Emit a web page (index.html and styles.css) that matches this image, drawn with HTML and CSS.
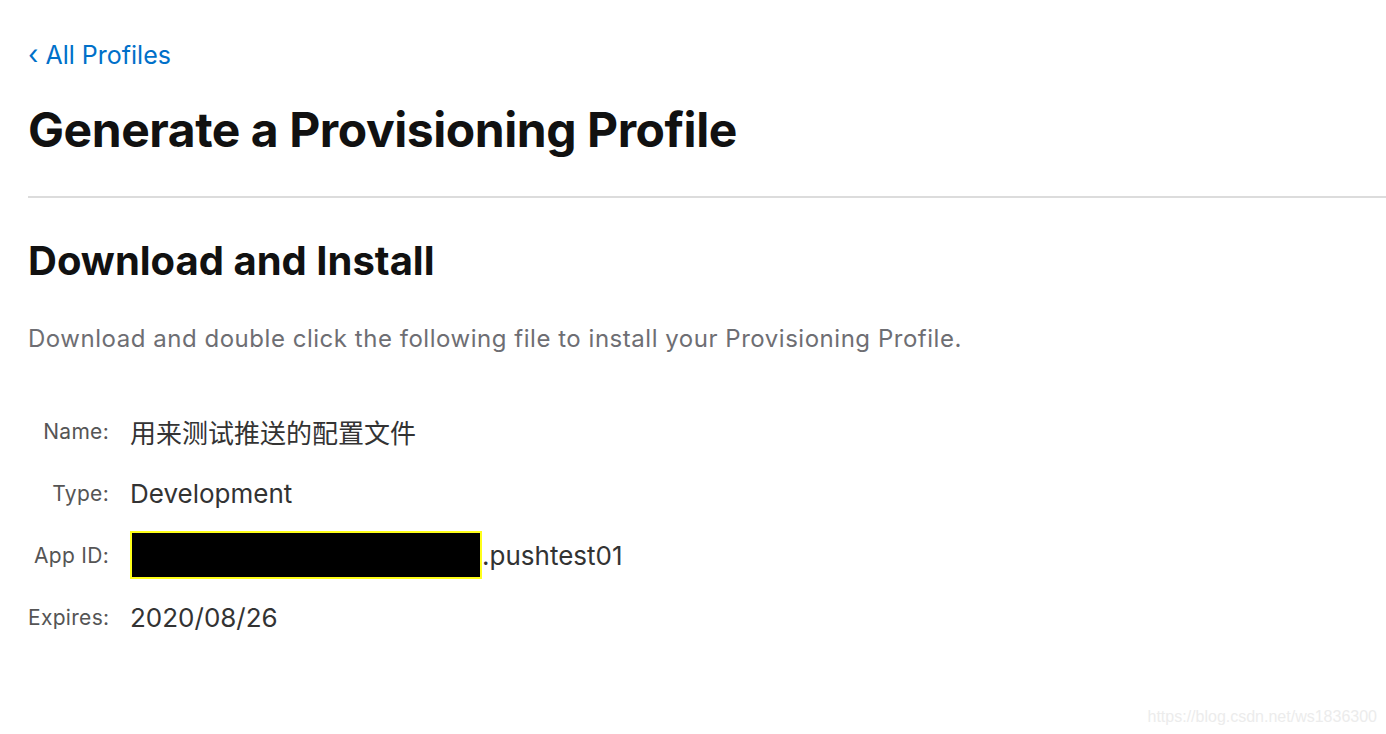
FILE: index.html
```html
<!DOCTYPE html>
<html lang="en">
<head>
<meta charset="utf-8">
<title>Generate a Provisioning Profile</title>
<link rel="stylesheet" href="styles.css">
</head>
<body>
<main class="page">
  <a class="back" href="#"><span class="chev">‹</span> All Profiles</a>
  <h1 class="title">Generate a Provisioning Profile</h1>
  <hr class="rule">
  <h2 class="subtitle">Download and Install</h2>
  <p class="intro">Download and double click the following file to install your Provisioning Profile.</p>
  <dl class="details">
    <div class="row"><dt>Name:</dt><dd>用来测试推送的配置文件</dd></div>
    <div class="row"><dt>Type:</dt><dd>Development</dd></div>
    <div class="row"><dt>App ID:</dt><dd><span class="redact"></span>.pushtest01</dd></div>
    <div class="row"><dt>Expires:</dt><dd>2020/08/26</dd></div>
  </dl>
</main>
<div class="watermark">https://blog.csdn.net/ws1836300</div>
</body>
</html>
```
FILE: styles.css
```css
html, body {
  margin: 0;
  padding: 0;
  background: #fff;
}
body {
  font-family: Inter, "Noto Sans CJK SC", sans-serif;
  width: 1386px;
  height: 734px;
  overflow: hidden;
  position: relative;
}
.page {
  padding: 36px 0 0 28px;
}
.back {
  display: inline-block;
  color: #0070c9;
  text-decoration: none;
  font-size: 25px;
  line-height: 38px;
}
.chev {
  font-size: 27px;
}
.title {
  margin: 27px 0 0 0;
  font-size: 48px;
  line-height: 58px;
  font-weight: 700;
  color: #111;
  letter-spacing: -0.45px;
}
.rule {
  margin: 37px 0 0 0;
  border: 0;
  border-top: 2px solid #dcdcdc;
}
.subtitle {
  margin: 37px 0 0 0;
  font-size: 40px;
  line-height: 52px;
  font-weight: 700;
  color: #111;
}
.intro {
  margin: 34px 0 0 0;
  font-size: 24px;
  line-height: 36px;
  color: #6e6e73;
  letter-spacing: 0.53px;
}
.details {
  margin: 50px 0 0 0;
  display: flex;
  flex-direction: column;
  gap: 14px;
}
.row {
  display: flex;
  align-items: center;
  height: 48px;
}
.row dt {
  width: 81px;
  text-align: right;
  font-size: 21px;
  letter-spacing: 0.3px;
  color: #555;
}
.row dd {
  margin: 0 0 0 21px;
  font-size: 26px;
  color: #333;
  display: flex;
  align-items: center;
}
.redact {
  display: inline-block;
  width: 348px;
  height: 44px;
  background: #000;
  border: 2px solid #ffff1a;
}
.watermark {
  position: absolute;
  right: 9px;
  bottom: 8px;
  font-family: "Liberation Sans", Arial, sans-serif;
  font-size: 16px;
  color: #ececec;
}
```
